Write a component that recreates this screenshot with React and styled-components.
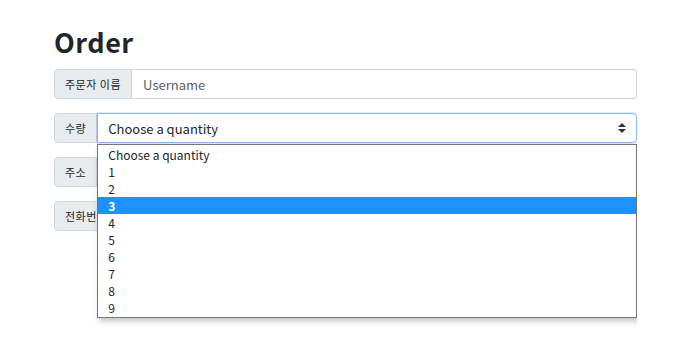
import React from 'react'
import styled, { createGlobalStyle } from 'styled-components'

const Global = createGlobalStyle`
html, body {
  margin: 0;
  background: #fff;
  font-family: "Noto Sans CJK KR", "Noto Sans", sans-serif;
  color: #212529;
}
`

const Page = styled.div`
width: 637px;
height: 100vh;
box-sizing: border-box;
padding: 24px 0 0 54px;
overflow: hidden;
`

const Title = styled.h1`
margin: 0 0 10px;
font-size: 27px;
font-weight: 700;
line-height: 35px;
letter-spacing: 0.5px;
`

const Form = styled.div`
display: flex;
flex-direction: column;
gap: 14px;
`

const Group = styled.div`
display: flex;
height: 30px;
`

const Label = styled.span`
display: flex;
align-items: center;
padding: 0 10px;
font-size: 11px;
letter-spacing: 0.5px;
color: #212529;
background: #e9ecef;
border: 1px solid #ced4da;
border-radius: 4px 0 0 4px;
white-space: nowrap;
`

const Input = styled.div`
flex: 1;
display: flex;
align-items: center;
padding: 0 11px;
font-size: 13px;
color: #585e64;
border: 1px solid #ced4da;
border-left: none;
border-radius: 0 4px 4px 0;
`

const SelectWrap = styled.div`
flex: 1;
position: relative;
`

const Select = styled.div`
height: 100%;
box-sizing: border-box;
display: flex;
align-items: center;
justify-content: space-between;
padding: 0 10px;
font-size: 13px;
border: 1px solid #86b7fe;
border-radius: 0 4px 4px 0;
box-shadow: 0 0 0 1px rgba(13, 110, 253, 0.12);
`

const Arrows = styled.svg`
width: 8px;
height: 10px;
`

const List = styled.ul`
position: absolute;
top: 31px;
left: 0;
right: 0;
margin: 0;
padding: 1px 0;
list-style: none;
background: #fff;
border: 1px solid #767676;
box-shadow: 2px 3px 6px rgba(0, 0, 0, 0.25);
z-index: 2;
`

const Option = styled.li`
height: 17px;
line-height: 17px;
padding: 0 10px;
font-size: 12px;
font-weight: ${p => (p.$active ? 700 : 400)};
color: ${p => (p.$active ? '#fff' : '#212529')};
background: ${p => (p.$active ? '#1e90ff' : 'transparent')};
`

const options = ['Choose a quantity', '1', '2', '3', '4', '5', '6', '7', '8', '9']

export default function App() {
  return (
    <>
      <Global />
      <Page>
        <Title>Order</Title>
        <Form>
          <Group>
            <Label>주문자 이름</Label>
            <Input>Username</Input>
          </Group>
          <Group>
            <Label>수량</Label>
            <SelectWrap>
              <Select>
                Choose a quantity
                <Arrows viewBox="0 0 8 10">
                  <path d="M0 4 L4 0 L8 4 Z M0 6 L8 6 L4 10 Z" fill="#333" />
                </Arrows>
              </Select>
              <List>
                {options.map(o => (
                  <Option key={o} $active={o === '3'}>{o}</Option>
                ))}
              </List>
            </SelectWrap>
          </Group>
          <Group>
            <Label>주소</Label>
            <Input />
          </Group>
          <Group>
            <Label>전화번호</Label>
            <Input />
          </Group>
        </Form>
      </Page>
    </>
  )
}
